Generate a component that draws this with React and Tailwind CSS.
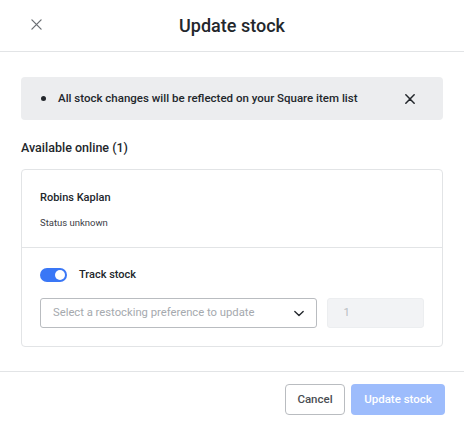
import React from "react";

const FONT = { fontFamily: "Roboto, 'Noto Sans', 'Liberation Sans', sans-serif" };

function XIcon({ className = "", strokeWidth = 1.6 }) {
  return (
    <svg viewBox="0 0 12 12" className={className} fill="none" stroke="currentColor" strokeWidth={strokeWidth} strokeLinecap="round">
      <path d="M1 1 L11 11 M11 1 L1 11" />
    </svg>
  );
}

export default function App() {
  return (
    <div className="w-[464px] h-[424px] bg-white text-[#1f2328] overflow-hidden" style={FONT}>
      {/* header */}
      <header className="relative h-[52px] flex items-center justify-center border-b border-[#e2e4e6]">
        <button className="absolute left-[31px] top-[19px] text-[#6b6f74]">
          <XIcon className="w-[11px] h-[11px]" strokeWidth={1.4} />
        </button>
        <h1 className="text-[18px] font-medium text-[#23272c] pb-[1px]">Update stock</h1>
      </header>

      <div className="px-[21px] pt-[25px] h-[320px] border-b border-[#e2e4e6]">
        {/* banner */}
        <div className="h-[43px] rounded-[4px] bg-[#ecedef] flex items-center pl-[37px] pr-[28px] relative">
          <span className="absolute left-[20px] w-[5px] h-[5px] rounded-full bg-[#23272c]" />
          <p className="flex-1 text-[11.5px] font-medium text-[#23272c]">
            All stock changes will be reflected on your Square item list
          </p>
          <XIcon className="w-[10px] h-[10px] text-[#23272c]" strokeWidth={1.8} />
        </div>

        <h2 className="mt-[18px] text-[12.5px] font-medium text-[#23272c] leading-[20px]">Available online (1)</h2>

        {/* card */}
        <div className="mt-[11px] border border-[#e2e4e6] rounded-[4px]">
          <div className="h-[78px] px-[18px] pt-[19px] border-b border-[#e2e4e6]">
            <div className="text-[11px] font-medium leading-[18px] text-[#23272c]">Robins Kaplan</div>
            <div className="mt-[8px] text-[9.5px] leading-[16px] text-[#3c4046]">Status unknown</div>
          </div>
          <div className="px-[18px] pt-[20px] pb-[18px]">
            <div className="flex items-center gap-[12px] h-[14px]">
              <div className="w-[27px] h-[14px] rounded-full bg-[#3a77f6] flex items-center justify-end pr-[2px]">
                <div className="w-[10px] h-[10px] rounded-full bg-white" />
              </div>
              <span className="text-[11px] font-medium text-[#23272c]">Track stock</span>
            </div>
            <div className="mt-[16px] flex gap-[10px]">
              <div className="w-[279px] h-[30px] border border-[#b9bcc0] rounded-[3px] flex items-center pl-[12px] pr-[12px]">
                <span className="flex-1 text-[11.25px] text-[#a5a9ae]">Select a restocking preference to update</span>
                <svg viewBox="0 0 12 8" className="w-[10px] h-[7px] text-[#23272c]" fill="none" stroke="currentColor" strokeWidth="1.6" strokeLinecap="round" strokeLinejoin="round">
                  <path d="M1 1.5 L6 6.5 L11 1.5" />
                </svg>
              </div>
              <div className="w-[97px] h-[30px] rounded-[3px] bg-[#f2f3f5] border border-[#eceef0] flex items-center pl-[15px] text-[11.25px] text-[#b9bdc2]">
                1
              </div>
            </div>
          </div>
        </div>
      </div>

      {/* footer */}
      <div className="flex justify-end gap-[6px] px-[19px] pt-[12px]">
        <button className="w-[60px] h-[31px] border border-[#b9bcc0] rounded-[4px] text-[11.5px] font-medium text-[#4a4e53] bg-white">
          Cancel
        </button>
        <button className="w-[94px] h-[31px] rounded-[4px] bg-[#9dbcfc] text-[11.5px] font-medium text-white">
          Update stock
        </button>
      </div>
    </div>
  );
}
